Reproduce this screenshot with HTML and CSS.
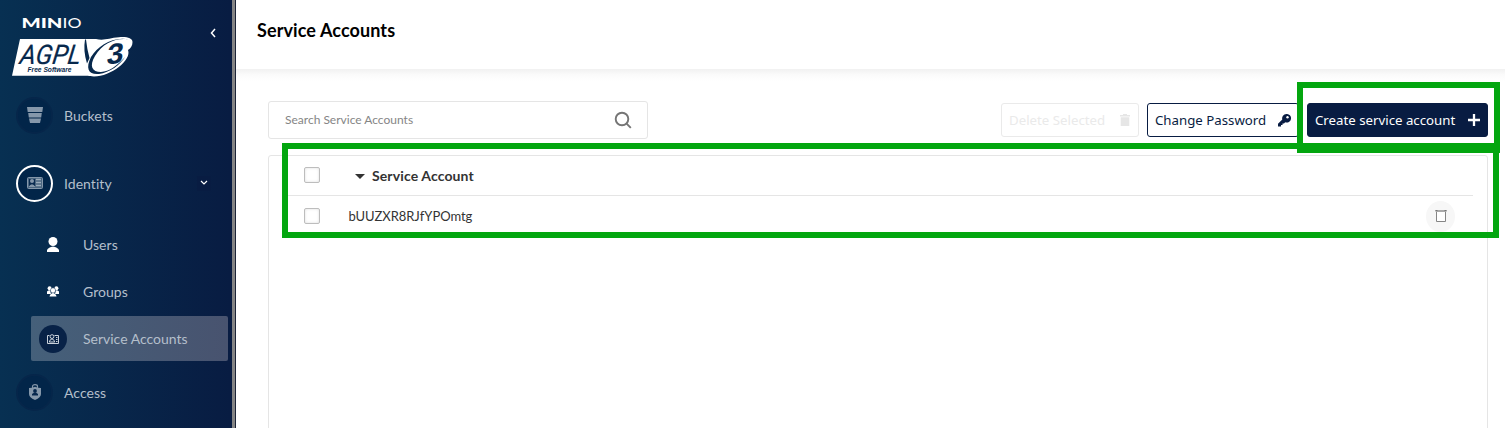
FILE: index.html
```html
<!DOCTYPE html>
<html lang="en">
<head>
<meta charset="utf-8">
<title>Service Accounts</title>
<link rel="stylesheet" href="styles.css">
</head>
<body>
<div class="app">
  <aside class="sidebar">
    <div class="brand">
      <svg class="logo" width="122" height="64" viewBox="0 0 122 64">
        <text class="wordmark" x="9.500" y="13.700" textLength="41" lengthAdjust="spacingAndGlyphs">MIN</text>
        <text class="wordmark thin" x="50.500" y="13.700" textLength="19" lengthAdjust="spacingAndGlyphs">IO</text>
        <path fill="#fff" d="M8 25H84C92 27 97 24 107 23.300C115 22.500 120.500 24.500 120.500 28C120.500 31.500 119 34 116 36C120 46 99 62.500 82 62.500C79 62.500 77 62 76 61.800H0Z"/>
        <g transform="translate(7 49.500) skewX(-8)"><text class="license" x="0" y="0" textLength="61" lengthAdjust="spacingAndGlyphs">AGPL</text></g>
        <path fill="#07284c" d="M73 25.500Q71 37 75 49.500L77.500 44Q75 35 74 25.500Z"/>
        <path fill="#07284c" d="M117 25.500C101 22 86 32 79 43C73 55 77 61 87 60C98 58.500 108 51 113 43C105 52 97 57.500 89 58C80 58 77 52 83 42C91 29 104 23.500 117 25.500Z"/>
        <g transform="translate(94 51) rotate(-10) skewX(-16)"><text class="version" x="0" y="0" textLength="17" lengthAdjust="spacingAndGlyphs">3</text></g>
        <text class="tagline" x="15.500" y="58.300" textLength="44" lengthAdjust="spacingAndGlyphs">Free Software</text>
      </svg>
      <svg class="collapse" width="8" height="12" viewBox="0 0 8 12"><path d="M6 2 2.500 6 6 10" fill="none" stroke="#fff" stroke-width="1.500"/></svg>
    </div>
    <nav class="menu">
      <a class="item buckets"><span class="disc"><svg width="16" height="16" viewBox="0 0 16 16" fill="#8597aa"><path d="M0 0H16L15.300 5H.7ZM1.200 6H14.800L14.200 10.500H1.800ZM2 11.500H14L13 16H3Z"/></svg></span>Buckets</a>
      <a class="item identity"><span class="disc active"><svg width="16" height="12" viewBox="0 0 16 12"><rect x=".5" y=".5" width="15" height="11" rx="1" fill="#4b6680" stroke="#8597aa"/><path d="M2 2h6v7H2z" fill="#0a2b50"/><circle cx="5" cy="4" r="2" fill="#8597aa"/><path d="M1.500 10Q5 4.500 8.500 10Z" fill="#8597aa"/><path d="M9 2.500h5M9 5.500h5M9 8.500h5" stroke="#9aabba" stroke-width="1.300"/></svg></span>Identity<span class="toggle"><svg width="8" height="6" viewBox="0 0 8 6"><path d="m1 1 3 3 3-3" fill="none" stroke="#fff" stroke-width="1.200"/></svg></span></a>
      <a class="sub users"><span class="subicon"><svg width="12" height="15" viewBox="0 0 12 15" fill="#fff"><circle cx="6" cy="4.500" r="4.500"/><path d="M0 15V13Q1.500 10 6 9.500Q10.500 10 12 13V15Z"/></svg></span>Users</a>
      <a class="sub groups"><span class="subicon"><svg class="people" width="12" height="11" viewBox="0 0 12 11" fill="#fff"><circle cx="2.600" cy="2.200" r="2"/><circle cx="9.400" cy="2.200" r="2"/><path d="M0 8V5.500Q1 4.300 3 4.300L4 8ZM12 8V5.500Q11 4.300 9 4.300L8 8Z"/><circle cx="6" cy="4.400" r="2.600" stroke="#082b50" stroke-width=".5"/><path d="M2.500 10.500Q3 7.500 6 7Q9 7.500 9.500 10.500Z"/></svg></span>Groups</a>
      <a class="sub accounts"><span class="subicon dark"><svg width="12" height="10" viewBox="0 0 12 10" fill="none" stroke="#c9d0da"><path d="M2.500 1.500H.5v8h11v-8H7.500"/><circle cx="5" cy="2.600" r="1.900"/><path d="M2.300 8Q3 5 5 5T7.700 8Z"/><path d="M9 3.500h1.500M9 5.500h1.500M9 7.500h1.500" stroke-width="1.200"/></svg></span>Service Accounts</a>
      <a class="item access"><span class="disc"><svg width="12" height="16" viewBox="0 0 12 16"><path d="M3.500 4V2.500Q3.500.7 6 .7T8.500 2.500V4" fill="none" stroke="#8597aa" stroke-width="1.200"/><path d="M0 4Q3 4 6 2.700Q9 4 12 4V10Q12 13.500 6 16Q0 13.500 0 10Z" fill="#8597aa"/><circle cx="6" cy="7" r="1.900" fill="#06274d"/><path d="M3 11.500V10Q6 7.500 9 10V11.500Z" fill="#06274d"/></svg></span>Access</a>
    </nav>
  </aside>
  <main class="main">
    <header class="header"><h1 class="title">Service Accounts</h1></header>
    <section class="content">
      <div class="toolbar">
        <div class="search"><span class="placeholder">Search Service Accounts</span><svg width="18" height="18" viewBox="0 0 18 18"><g fill="none" stroke="#757575" stroke-width="1.900"><circle cx="8" cy="8" r="6.300"/><path d="m12.600 12.600 4.200 4.200"/></g></svg></div>
        <div class="actions">
          <button class="btn delete" disabled><span class="label">Delete Selected</span><svg width="10" height="12" viewBox="0 0 10 12" fill="#e6e6e6"><path d="M0 1H3V0H7V1H10V2.500H0ZM.7 3.200H9.300V12H.7Z"/></svg></button>
          <button class="btn password"><span class="label">Change Password</span><svg width="13" height="13" viewBox="0 0 13 13"><path d="M8.400 0a4.300 4.300 0 0 0-4.100 5.500L0 9.800V12.500H3V11H4.500V9.500H6L7.200 8.300A4.300 4.300 0 1 0 8.400 0Z" fill="#081c42"/><circle cx="9.500" cy="3.300" r="1.200" fill="#fff"/></svg></button>
          <button class="btn create"><span class="label">Create service account</span><svg width="12" height="12" viewBox="0 0 12 12"><path d="M6 0V12M0 6H12" stroke="#fff" stroke-width="2.300"/></svg></button>
        </div>
      </div>
      <div class="table">
        <div class="row head"><span class="check"></span><span class="arrow"></span><span class="heading">Service Account</span></div>
        <div class="row"><span class="check"></span><span class="value">bUUZXR8RJfYPOmtg</span><span class="remove"><svg width="12" height="14" viewBox="0 0 12 14"><path d="M1.500 2.500V12.500H10.500V2.500" fill="#fff" stroke="#858585"/><path d="M.5 1H11.500V3H.5Z" fill="#aaa"/><path d="M.5 1h2v1h-2zM9.500 1h2v1h-2z" fill="#777"/></svg></span></div>
      </div>
    </section>
  </main>
  <div class="marker marker-table"></div>
  <div class="marker marker-create"></div>
</div>
</body>
</html>
```
FILE: styles.css
```css
* { box-sizing: border-box; }
body { margin: 0; font-family: Lato, sans-serif; background: #fff; overflow: hidden; }
.app { position: relative; display: flex; width: 1505px; height: 428px; overflow: hidden; }
.sidebar { width: 236px; flex: none; border-right: 1px solid #1c2437; box-shadow: inset -3px 0 #858585; background: linear-gradient(90deg, #073052 0%, #081c42 98%); }
.brand { display: flex; height: 96px; padding: 14px 0 0 12px; }
.collapse { margin: 13px 0 0 75px; }
.wordmark { font: 900 12.5px Lato, sans-serif; fill: #fff; }
.thin { font-weight: 400; }
.license { font: italic 400 27px Roboto, sans-serif; fill: #07284c; stroke: #07284c; stroke-width: .2px; }
.version { font: bold 28px "Liberation Sans", sans-serif; fill: #07284c; }
.tagline { font: italic bold 6.5px "Liberation Sans", sans-serif; fill: #07284c; }
.menu { display: flex; flex-direction: column; color: #b4bfcb; font-size: 14px; letter-spacing: .05px; }
.item { display: flex; align-items: center; height: 38px; margin-left: 16px; }
.disc { display: flex; align-items: center; justify-content: center; width: 37px; height: 37px; margin-right: 11px; border: 2px solid #06264a; border-radius: 50%; background: #022549; }
.disc.active { border-color: #fff; }
.identity { margin-top: 30px; }
.toggle { display: flex; align-items: center; justify-content: center; width: 14px; height: 15px; margin-left: 85px; background: #081c42; }
.sub { display: flex; align-items: center; width: 197px; height: 45px; margin: 0 0 2px 31px; padding-left: 8px; border-radius: 2px; }
.subicon { display: flex; align-items: center; justify-content: center; width: 28px; height: 28px; margin-right: 16px; border-radius: 50%; }
.people { margin-bottom: 1px; }
.dark { background: #082247; }
.users { margin-top: 20px; }
.accounts { background: linear-gradient(90deg, #45607a, #48536f); letter-spacing: 0; }
.access { margin-top: 10px; }
.main { flex: 1; min-width: 0; }
.header { height: 69px; padding: 19px 0 0 21px; }
.title { margin: 0; font-size: 18px; line-height: 22px; font-weight: bold; letter-spacing: .1px; color: #000; }
.content { height: 359px; padding: 32px 17px 0 32px; background: linear-gradient(#f1f1f1, #fbfbfb 6px, #fff 12px); }
.toolbar { display: flex; justify-content: space-between; align-items: flex-start; height: 54px; }
.search { display: flex; align-items: center; justify-content: space-between; width: 380px; height: 38px; padding: 0 15px 0 16px; border: 1px solid #e5e5e5; border-radius: 3px; background: #fff; }
.placeholder { margin-top: -2px; font-size: 12px; color: #858585; }
.actions { display: flex; gap: 8px; padding-top: 2px; }
.btn { display: flex; align-items: center; justify-content: space-between; height: 34px; padding: 0 7px; border: 1px solid #081c42; border-radius: 3px; background: #fff; color: #081c42; font: 13.25px "Noto Sans", sans-serif; white-space: nowrap; }
.label { margin-top: -1px; }
.delete { width: 138px; padding-right: 8px; border-color: #eaeaea; color: #eaeaea; }
.password { width: 152px; }
.create { width: 181px; background: #081c42; color: #fff; }
.table { height: 300px; padding: 0 14px 0 19px; border: 1px solid #e5e5e5; border-radius: 3px 3px 0 0; color: #333; }
.row { display: flex; align-items: center; height: 40px; padding-left: 16px; font-size: 14px; }
.head { border-bottom: 1px solid #e5e5e5; font-weight: bold; letter-spacing: .12px; }
.head .check { margin-top: -1px; }
.check { width: 16px; height: 16px; border: 1px solid #bdbdbd; border-radius: 2px; background: #fff; box-shadow: inset 0 0 3px #ddd; }
.arrow { width: 10px; margin: 2px 7px 0 35px; border: 5px solid transparent; border-top-color: #333; border-bottom: 0; }
.value { margin-left: 28.5px; font-size: 13px; letter-spacing: -.05px; }
.remove { display: flex; align-items: center; justify-content: center; width: 29px; height: 31px; margin: 0 18px 0 auto; border-radius: 50%; background: #f7f7f7; }
.marker { position: absolute; border: 6px solid #03a60f; }
.marker-table { left: 282px; top: 143px; width: 1217px; height: 95px; }
.marker-create { left: 1297px; top: 82px; width: 203px; height: 71px; border-bottom-width: 10px; }
```
